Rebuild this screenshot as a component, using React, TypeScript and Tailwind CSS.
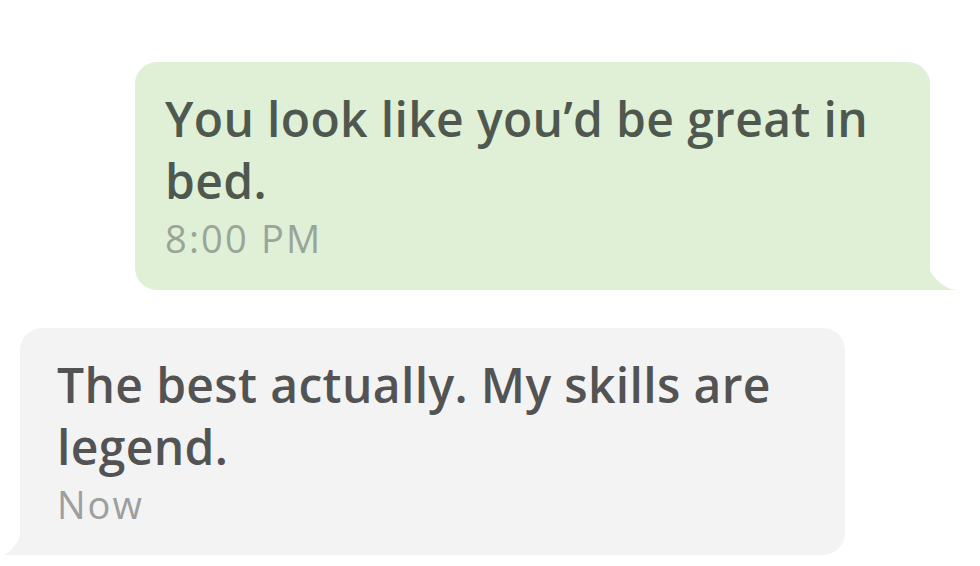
export default function App() {
  return (
    <div
      className="w-[980px] h-[566px] bg-white overflow-hidden flex flex-col"
      style={{ fontFamily: '"Open Sans", "Liberation Sans", Arial, sans-serif' }}
    >
      {/* Sent */}
      <div className="relative ml-[135px] mt-[62px] w-[795px] h-[228px] bg-[#dff0d7] rounded-[22px] rounded-br-none pl-[30px] pt-[26px] pr-[40px]">
        <p className="text-[48px] leading-[62px] font-semibold tracking-[0.35px] text-[#4f584f]">
          You look like you’d be great in bed.
        </p>
        <p className="text-[38px] leading-[52px] tracking-[2.2px] text-[#9aa59a]">8:00 PM</p>
        <svg className="absolute right-[-26px] bottom-0" width="27" height="22" viewBox="0 0 27 22">
          <path d="M0 0 C4 10 14 20 27 22 L0 22 Z" fill="#dff0d7" />
        </svg>
      </div>

      {/* Received */}
      <div className="relative ml-[20px] mt-[38px] w-[825px] h-[227px] bg-[#f3f3f3] rounded-[22px] rounded-bl-none pl-[37px] pt-[26px] pr-[40px]">
        <p className="text-[48px] leading-[62px] font-semibold tracking-[0.35px] text-[#535353]">
          The best actually. My skills are legend.
        </p>
        <p className="text-[38px] leading-[52px] tracking-[2px] text-[#9e9e9e]">Now</p>
        <svg className="absolute left-[-16px] bottom-0" width="17" height="22" viewBox="0 0 17 22">
          <path d="M17 0 C14 10 8 18 0 22 L17 22 Z" fill="#f3f3f3" />
        </svg>
      </div>
    </div>
  );
}
